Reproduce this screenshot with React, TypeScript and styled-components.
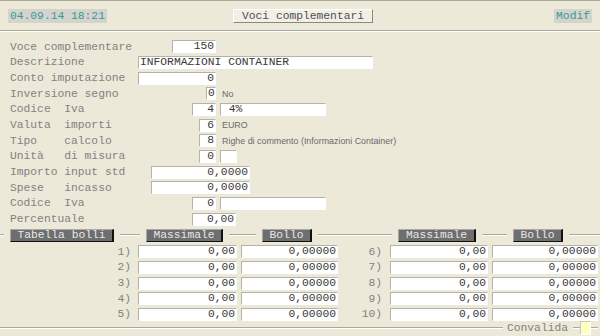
import React from 'react';
import styled, { createGlobalStyle } from 'styled-components';

const GlobalStyle = createGlobalStyle`
  html, body {
    margin: 0;
    padding: 0;
    background: #ece9d8;
  }
  * {
    box-sizing: border-box;
  }
`;

const MONO = `"Liberation Mono", "Courier New", monospace`;

// Window frame
const Screen = styled.div`
  width: 600px;
  height: 336px;
  overflow: hidden;
  background: #ece9d8;
  border-top: 1px solid #aca899;
  font-family: ${MONO};
  font-size: 11.3px;
  color: #828282;
`;

const Header = styled.div`
  display: grid;
  grid-template-columns: 1fr auto 1fr;
  align-items: center;
  height: 30px;
  padding: 0 8px;
  border-bottom: 1px solid #aca899;
  box-shadow: 0 1px 0 #ffffff;
`;

const StatusBox = styled.div<{ $align: 'start' | 'end' }>`
  justify-self: ${({ $align }) => $align};
  height: 14px;
  line-height: 14px;
  padding: 0 2px;
  background: #d4d3cc;
  color: #3a9a9a;
  white-space: pre;
`;

const TitleButton = styled.div`
  height: 14px;
  line-height: 12px;
  padding: 0 8px;
  margin-left: 6px;
  background: #f1efe6;
  color: #505050;
  border: 1px solid;
  border-color: #ffffff #8a887c #8a887c #ffffff;
  white-space: pre;
`;

// Form
const Form = styled.div`
  display: grid;
  grid-auto-rows: 15.67px;
  padding: 8px 0 0 10px;
`;

const Row = styled.div`
  display: flex;
  align-items: center;
`;

const Label = styled.div`
  width: 128px;
  flex: none;
  white-space: pre;
  color: #828282;
`;

const Field = styled.div<{ $x?: number; $w: number; $left?: boolean }>`
  flex: none;
  margin-left: ${({ $x }) => $x ?? 0}px;
  width: ${({ $w }) => $w}px;
  height: 13px;
  line-height: 11px;
  padding: 0 1px;
  background: #ffffff;
  border: 1px solid;
  border-color: #b5b3a8 #ffffff #ffffff #b5b3a8;
  text-align: ${({ $left }) => ($left ? 'left' : 'right')};
  color: #383838;
  white-space: pre;
  overflow: hidden;
`;

const Note = styled.span`
  margin-left: 6px;
  font-family: "Liberation Sans", Arial, sans-serif;
  font-size: 8.9px;
  color: #6a6a6a;
  white-space: nowrap;
`;

// Tabella bolli group
const Group = styled.div`
  margin-top: 2px;
`;

const GroupHead = styled.div`
  display: flex;
  align-items: center;
  height: 13px;
`;

const Connector = styled.div<{ $w: number; $ml?: number; $mr?: number }>`
  flex: none;
  width: ${({ $w }) => $w}px;
  margin-left: ${({ $ml }) => $ml ?? 6}px;
  margin-right: ${({ $mr }) => $mr ?? 6}px;
  border-top: 1px solid #aca899;
  border-bottom: 1px solid #ffffff;
`;

const DarkButton = styled.div<{ $w: number }>`
  flex: none;
  width: ${({ $w }) => $w}px;
  height: 13px;
  line-height: 11px;
  text-align: center;
  background: #6e6e6e;
  color: #e6e6e6;
  border: 1px solid;
  border-color: #a8a8a8 #111111 #111111 #a8a8a8;
  border-right-width: 2px;
`;

const Table = styled.div`
  display: grid;
  grid-template-columns: 138px 103px 97px 52px 102px 106px;
  grid-auto-rows: 15.67px;
  align-items: center;
  margin-top: 2px;
`;

const Num = styled.div<{ $pr: number }>`
  text-align: right;
  padding-right: ${({ $pr }) => $pr}px;
  color: #828282;
`;

const Footer = styled.div`
  display: flex;
  align-items: center;
  height: 8px;
  margin-top: 2px;
`;

const FooterLine = styled.div<{ $w?: number; $ml?: number; $mr?: number }>`
  flex: ${({ $w }) => ($w ? 'none' : '1')};
  width: ${({ $w }) => ($w ? `${$w}px` : 'auto')};
  margin-left: ${({ $ml }) => $ml ?? 0}px;
  margin-right: ${({ $mr }) => $mr ?? 0}px;
  border-top: 1px solid #aca899;
  border-bottom: 1px solid #ffffff;
`;

const FooterText = styled.span`
  color: #828282;
`;

const Flag = styled.div`
  flex: none;
  width: 11px;
  height: 14px;
  background: #ffffc4;
  border: 1px solid;
  border-color: #c8c6b8 #ffffff #ffffff #c8c6b8;
`;

interface FieldSpec {
  x: number;
  w: number;
  value: string;
  left?: boolean;
}

interface FormRow {
  label: string;
  fields: FieldSpec[];
  note?: string;
}

const rows: FormRow[] = [
  { label: 'Voce complementare', fields: [{ x: 34, w: 44, value: '150' }] },
  { label: 'Descrizione', fields: [{ x: 0, w: 235, value: 'INFORMAZIONI CONTAINER', left: true }] },
  { label: 'Conto imputazione', fields: [{ x: 0, w: 78, value: '0' }] },
  { label: 'Inversione segno', fields: [{ x: 68, w: 10, value: '0' }], note: 'No' },
  {
    label: 'Codice  Iva',
    fields: [
      { x: 54, w: 24, value: '4' },
      { x: 4, w: 106, value: ' 4%', left: true },
    ],
  },
  { label: 'Valuta  importi', fields: [{ x: 61, w: 17, value: '6' }], note: 'EURO' },
  {
    label: 'Tipo    calcolo',
    fields: [{ x: 61, w: 17, value: '8' }],
    note: 'Righe di commento (Informazioni Container)',
  },
  {
    label: 'Unità   di misura',
    fields: [
      { x: 61, w: 17, value: '0' },
      { x: 4, w: 17, value: '' },
    ],
  },
  { label: 'Importo input std', fields: [{ x: 13, w: 99, value: '0,0000' }] },
  { label: 'Spese   incasso', fields: [{ x: 13, w: 99, value: '0,0000' }] },
  {
    label: 'Codice  Iva',
    fields: [
      { x: 54, w: 24, value: '0' },
      { x: 4, w: 106, value: '' },
    ],
  },
  { label: 'Percentuale', fields: [{ x: 54, w: 44, value: '0,00' }] },
];

const bolli = [1, 2, 3, 4, 5];

const App: React.FC = () => {
  return (
    <>
      <GlobalStyle />
      <Screen>
        <Header>
          <StatusBox $align="start">04.09.14 18:21</StatusBox>
          <TitleButton>Voci complementari</TitleButton>
          <StatusBox $align="end">Modif</StatusBox>
        </Header>

        <Form>
          {rows.map((row, i) => (
            <Row key={i}>
              <Label>{row.label}</Label>
              {row.fields.map((f, j) => (
                <Field key={j} $x={f.x} $w={f.w} $left={f.left}>
                  {f.value}
                </Field>
              ))}
              {row.note && <Note>{row.note}</Note>}
            </Row>
          ))}
        </Form>

        <Group>
          <GroupHead>
            <Connector $w={4} $ml={0} $mr={6} />
            <DarkButton $w={104}>Tabella bolli</DarkButton>
            <Connector $w={20} />
            <DarkButton $w={77}>Massimale</DarkButton>
            <Connector $w={27} />
            <DarkButton $w={50}>Bollo</DarkButton>
            <Connector $w={74} />
            <DarkButton $w={78}>Massimale</DarkButton>
            <Connector $w={25} />
            <DarkButton $w={50}>Bollo</DarkButton>
            <Connector $w={33} $mr={0} />
          </GroupHead>

          <Table>
            {bolli.map((n) => (
              <React.Fragment key={n}>
                <Num $pr={7}>{n})</Num>
                <Field $w={99}>0,00</Field>
                <Field $w={97}>0,00000</Field>
                <Num $pr={8}>{n + 5})</Num>
                <Field $w={98}>0,00</Field>
                <Field $w={106}>0,00000</Field>
              </React.Fragment>
            ))}
          </Table>

          <Footer>
            <FooterLine $mr={4} />
            <FooterText>Convalida</FooterText>
            <FooterLine $w={7} $ml={5} />
            <Flag />
            <FooterLine $w={7} $mr={2} />
          </Footer>
        </Group>
      </Screen>
    </>
  );
};

export default App;
